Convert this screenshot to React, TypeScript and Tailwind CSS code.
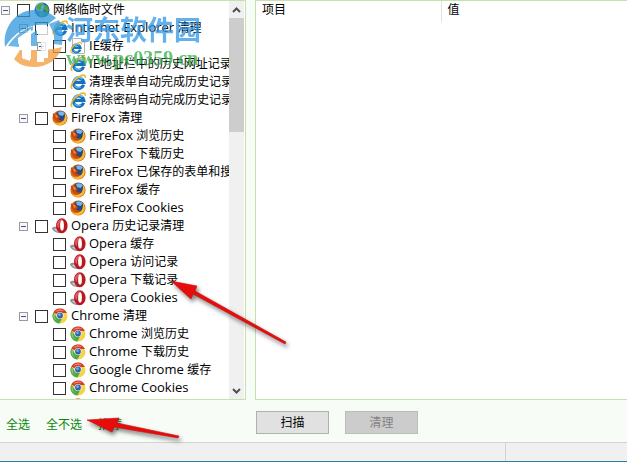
import type { ReactNode } from "react";

type Kind = "globe" | "ie" | "iepage" | "firefox" | "opera" | "chrome";
type Node = { label: string; icon: Kind; toggle?: "plus" | "minus"; children?: Node[] };

const leaf = (icon: Kind, ...labels: string[]): Node[] => labels.map((label) => ({ label, icon }));

const tree: Node[] = [
  {
    label: "网络临时文件",
    icon: "globe",
    toggle: "minus",
    children: [
      {
        label: "Internet Explorer 清理",
        icon: "ie",
        toggle: "minus",
        children: [
          { label: "IE缓存", icon: "iepage", toggle: "plus" },
          ...leaf("ie", "IE地址栏中的历史网址记录", "清理表单自动完成历史记录", "清除密码自动完成历史记录"),
        ],
      },
      {
        label: "FireFox 清理",
        icon: "firefox",
        toggle: "minus",
        children: leaf("firefox", "FireFox 浏览历史", "FireFox 下载历史", "FireFox 已保存的表单和搜索", "FireFox 缓存", "FireFox Cookies"),
      },
      {
        label: "Opera 历史记录清理",
        icon: "opera",
        toggle: "minus",
        children: leaf("opera", "Opera 缓存", "Opera 访问记录", "Opera 下载记录", "Opera Cookies"),
      },
      {
        label: "Chrome 清理",
        icon: "chrome",
        toggle: "minus",
        children: leaf("chrome", "Chrome 浏览历史", "Chrome 下载历史", "Google Chrome 缓存", "Chrome Cookies", "Chrome 会话"),
      },
    ],
  },
];

function IeGlyph() {
  return (
    <>
      <path d="M13.600 10.800A5.200 5.200 0 1 1 13.800 8.300H5" fill="none" stroke="#1672bd" strokeWidth="3.200" />
      <path d="M3.800 7A5 5 0 0 1 12.500 5" fill="none" stroke="#5fc3f5" strokeWidth="1.800" />
      <path d="M4.500 11.500A5 5 0 0 0 11 13" fill="none" stroke="#4fb2ec" strokeWidth="1.400" />
      <path d="M2.500 14.800C-1 13.500 3 6.500 8.600 3 12 .6 15.800.2 15.200 3.800" fill="none" stroke="#efb62f" strokeWidth="1.600" />
    </>
  );
}

const icons: Record<Kind, ReactNode> = {
  globe: (
    <>
      <circle cx="8" cy="8" r="7.500" fill="#2a66ad" />
      <circle cx="6" cy="5" r="4.500" fill="#8fc4ec" opacity=".7" />
      <path d="M3 3.500 7 1l2 2-2 2 1 2-3 1-2-1-1-2zM10 3l3 1 2 4-2 3-2-3-2-1zM5 10l4-1 2 3-3 3-2-1z" fill="#4aa548" />
      <path d="M11 12l4-2-1 3-3 2z" fill="#2b8431" />
    </>
  ),
  ie: <IeGlyph />,
  iepage: (
    <>
      <path d="M2.500.5h9l3 3v12h-12z" fill="#fff" stroke="#b5b5b5" />
      <path d="M11.500.5v3h3" fill="#eee" stroke="#b5b5b5" />
      <g transform="translate(0 3.500) scale(.75)">
        <IeGlyph />
      </g>
    </>
  ),
  firefox: (
    <>
      <circle cx="8" cy="8" r="7.600" fill="#dd6812" />
      <circle cx="8.800" cy="6.200" r="5.400" fill="#28497f" />
      <path d="M6 2.500c2-2 5-1.500 7 1L10.500 6 7 5z" fill="#7db4e2" />
      <path d="M1 3l1.500 1.500L5 4l1 2 2 1-1.500 1.500C6 10 8 11 10 10c-1 2.500-5 3-7 0C1 8 .5 5 1 3z" fill="#c8480f" />
      <path d="M3 4.500 5 5l1 2-2 1z" fill="#f08a22" />
      <path d="M13 3c3 4 2 9-2 11.300C7 16 3 14.500 1.500 11.500 5 15 11 13 12.300 9 13 7 13 5 13 3z" fill="#f9bd2c" />
    </>
  ),
  opera: (
    <>
      <path d="M0 10.500C0 8.500 4 8 7 9.500l4 5C8 16 1.500 14.500 0 10.500z" fill="#8f8f95" />
      <path d="M2 11c1-1 3-.6 4 .5l1 2C5 14 3 12.500 2 11z" fill="#c9c9cd" />
      <ellipse cx="9.800" cy="7.800" rx="5.800" ry="7.500" fill="#b9181f" />
      <path d="M5 6C5.500 2.500 8 .8 11 1.200 8.500 2 7.300 5 7 10 5.500 9.500 5 8 5 6z" fill="#dd5a5e" />
      <ellipse cx="10" cy="7.500" rx="1.900" ry="5.200" fill="#fff" />
    </>
  ),
  chrome: (
    <>
      <circle cx="8" cy="8" r="7.500" fill="#f6d448" />
      <path d="M8 8 1.300 4.500A7.500 7.500 0 0 1 14.900 5H8z" fill="#d63b2d" />
      <path d="M3 4A6.500 6.500 0 0 1 12.500 3C9 2.500 6 3 3 4z" fill="#ee8a7a" />
      <path d="M1.300 4.500A7.500 7.500 0 0 0 7.500 15.500L10.400 9.500 5 9.500z" fill="#4ca94a" />
      <path d="M1.500 6A7 7 0 0 0 5 13.500C3 11 2.500 8.500 3 7z" fill="#86cc7c" />
      <circle cx="8" cy="7.500" r="3.600" fill="#e9edf0" />
      <circle cx="8" cy="7.500" r="2.900" fill="#2f65aa" />
      <circle cx="7.500" cy="6.700" r="1.400" fill="#76a9de" />
    </>
  ),
};

function Toggle({ kind, label }: { kind: "plus" | "minus"; label: string }) {
  return (
    <button type="button" aria-label={label} className="h-[9px] w-[9px] shrink-0">
      <svg viewBox="0 0 9 9" className="block h-full w-full">
        <rect x=".5" y=".5" width="8" height="8" fill="#f7f8fa" stroke="#9a9a9e" />
        <path d={kind === "plus" ? "M2 4.500h5M4.500 2v5" : "M2 4.500h5"} stroke="#40558f" />
      </svg>
    </button>
  );
}

/* Latin words are set one size up so that they stand level with the Chinese glyphs. */
function Caption({ text }: { text: string }) {
  const [, latin, rest] = /^([A-Za-z ]*)(.*)$/.exec(text) ?? ["", "", text];
  return (
    <span className="whitespace-pre">
      {latin && <span className="font-['Open_Sans',sans-serif] text-[13px] leading-none">{latin}</span>}
      {rest}
    </span>
  );
}

function Branch({ nodes, nested = false }: { nodes: Node[]; nested?: boolean }) {
  return (
    <ul className={nested ? "pl-[18px]" : ""}>
      {nodes.map((n) => (
        <li key={n.label}>
          <div className="flex h-[18px] items-center">
            <span className="flex w-4 shrink-0">{n.toggle && <Toggle kind={n.toggle} label={n.label} />}</span>
            <label className="flex items-center">
              <input type="checkbox" className="h-[13px] w-[13px] shrink-0 appearance-none border border-[#333] bg-white" />
              <svg viewBox="0 0 16 16" className="ml-1 mr-[3px] h-4 w-4 shrink-0">
                {icons[n.icon]}
              </svg>
              <Caption text={n.label} />
            </label>
          </div>
          {n.children && <Branch nodes={n.children} nested />}
        </li>
      ))}
    </ul>
  );
}

function Chevron({ up = false }: { up?: boolean }) {
  return (
    <button type="button" aria-label={up ? "向上滚动" : "向下滚动"} className="flex h-[17px] items-center justify-center">
      <svg viewBox="0 0 9 6" className="h-[6px] w-[9px]">
        <path d={up ? "M1 5 4.500 1.500 8 5" : "M1 1 4.500 4.500 8 1"} fill="none" stroke="#505050" strokeWidth="2" />
      </svg>
    </button>
  );
}

function Watermark() {
  return (
    <div aria-hidden="true" className="pointer-events-none absolute left-1 top-2 flex gap-[2px] opacity-75">
      <svg viewBox="0 0 60 60" className="h-[60px] w-[60px]">
        <path d="M1 39C-2 20 12 2 30 2c10 0 17 3 22 8l-9 7C28 15 12 22 1 39z" fill="#2f98dc" />
        <path d="M4 38C12 26 22 20 29 18v4L15 31v8zM45 16l10-4c4 8 4 16 3 25l-8-1V26zM27 26l6-4v16h-6z" fill="#3ca0df" />
        <path d="M58 39C54 52 43 59 30 59 21 59 14 56 10 51l6-9h2v8l8 3V42h7v12h7V42l9-1z" fill="#f39a3c" />
        <path d="M14 30 27 21v30h-8V33l-5 3zM34 25l10-7v32h-7V29l-3 2z" fill="#fff" />
      </svg>
      <div className="whitespace-nowrap pt-[5px]">
        <p className="font-['Noto_Sans_CJK_SC',sans-serif] text-[27px] font-bold leading-[32px] text-[#2f98e6]">河东软件园</p>
        <p className="font-['Liberation_Serif',serif] text-[20px] font-bold leading-[26px] text-[#35ae4b]">www.pc0359.cn</p>
      </div>
    </div>
  );
}

function Arrows() {
  return (
    <svg viewBox="0 0 300 462" className="pointer-events-none absolute left-0 top-0 h-[462px] w-[300px]" aria-hidden="true">
      <g className="drop-shadow-[2px_3px_2px_rgba(0,0,0,0.5)]" fill="#e80c0c" stroke="#c01414" strokeWidth=".6">
        <path d="M171 281 197 286 195 291 286 342 285 344 193 294 191 299z" />
        <path d="M87 420 119 418 117 423 179 436 178 438 114 427 112 432z" />
      </g>
    </svg>
  );
}

export default function App() {
  return (
    <div className="relative flex h-screen min-h-[240px] flex-col overflow-hidden bg-[#f7fcf7] font-['Noto_Sans','Noto_Sans_CJK_SC',sans-serif] text-[12px] leading-[18px] text-black">
      <main className="flex min-h-0 flex-1 gap-[9px]">
        <section className="flex w-[246px] shrink-0 border-y border-r border-[#c5e2ac] bg-white">
          <div className="min-w-0 flex-1 overflow-hidden pl-px">
            <Branch nodes={tree} />
          </div>
          <div className="mr-px flex w-[15px] shrink-0 flex-col bg-[#f0f0f0]">
            <Chevron up />
            <div className="h-[114px] bg-[#cdcdcd]" />
            <div className="flex-1" />
            <Chevron />
          </div>
        </section>
        <section className="min-w-0 flex-1 border-y border-l border-[#c5e2ac] bg-white">
          <table className="w-full table-fixed text-left">
            <thead>
              <tr className="h-[21px]">
                <th className="w-[185px] border-r border-[#e2e2e2] px-[6px] align-top font-normal">项目</th>
                <th className="px-[6px] align-top font-normal">值</th>
              </tr>
            </thead>
          </table>
        </section>
      </main>
      <footer className="flex h-[42px] shrink-0 items-start pt-[11px]">
        <nav className="flex w-[256px] shrink-0 gap-4 pl-[6px] pt-[5px] text-[#0b870b]">
          <a href="#all">全选</a>
          <a href="#none">全不选</a>
          <a href="#recommended">推荐</a>
        </nav>
        <div className="flex gap-4">
          <button type="button" className="h-[23px] w-[73px] border border-[#adb2ad] bg-[#e1e1e1]">扫描</button>
          <button type="button" disabled className="h-[23px] w-[73px] border border-[#b9beb9] bg-[#cccccc] text-[#838383]">清理</button>
        </div>
      </footer>
      <div className="flex h-5 shrink-0 border-b border-t border-b-[#2f7cab] border-t-[#d2d5d2] bg-[#f0f0f0]">
        <div className="flex-1 border-r border-[#d2d2d2]" />
        <div className="w-[121px]" />
      </div>
      <Watermark />
      <Arrows />
    </div>
  );
}
